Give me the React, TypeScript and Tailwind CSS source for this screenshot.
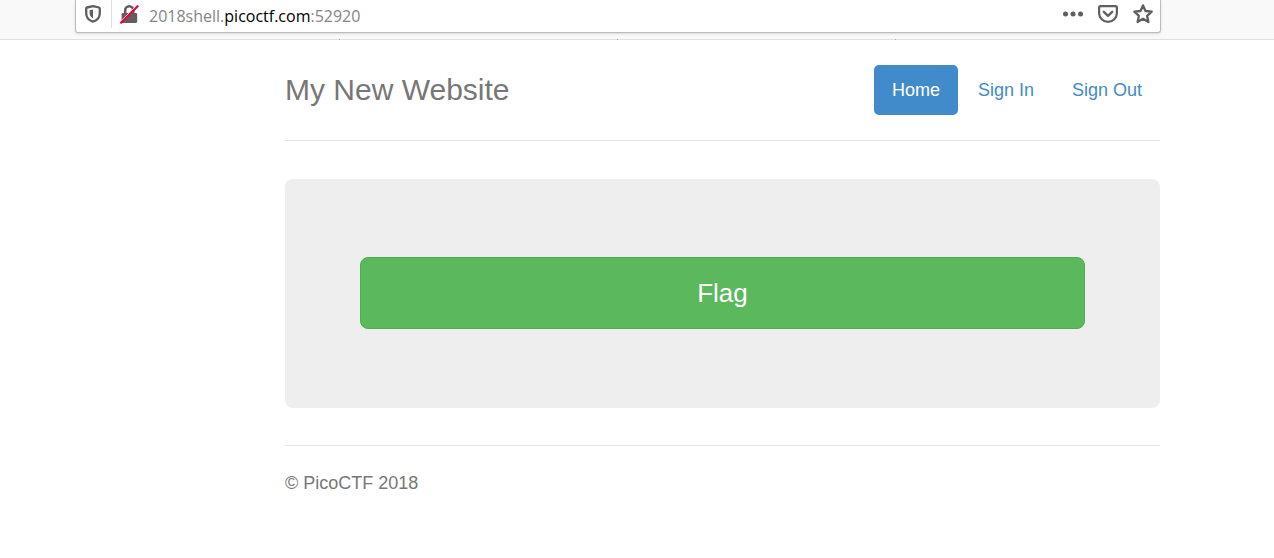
import type { ReactNode } from "react";

function ShieldIcon() {
  return (
    <svg viewBox="0 0 16 18" className="h-[18px] w-4" fill="none" aria-hidden="true">
      <path
        d="M8 1.2 14 2.5C14.5 2.6 14.8 3 14.8 3.5V8C14.8 12.2 12.2 15.4 8 16.7 3.8 15.4 1.2 12.2 1.2 8V3.5C1.2 3 1.5 2.6 2 2.5Z"
        stroke="#5f5f5f"
        strokeWidth="2.3"
        strokeLinejoin="round"
      />
      <path d="M8 4.6V13.2C5.6 12 4.6 10.2 4.6 7.8V5.2Z" fill="#5f5f5f" />
    </svg>
  );
}

function InsecureIcon() {
  return (
    <svg viewBox="0 0 19 20" className="h-5 w-[19px]" fill="none" aria-hidden="true">
      <path d="M5.2 10V6.2a4 4 0 0 1 8 0V10" stroke="#5f5f5f" strokeWidth="2.6" />
      <rect x="1.6" y="9" width="15.6" height="10" rx="1.4" fill="#5f5f5f" />
      <path d="M0.2 17.8 16.8 1.2" stroke="#fff" strokeWidth="1" />
      <path d="M1.2 18.6 17.6 2.2" stroke="#f0033f" strokeWidth="2.3" strokeLinecap="round" />
    </svg>
  );
}

function DotsIcon() {
  return (
    <svg viewBox="0 0 20 6" className="h-[6px] w-5" fill="#5f5f5f" aria-hidden="true">
      <circle cx="2.5" cy="3" r="2.5" />
      <circle cx="10" cy="3" r="2.5" />
      <circle cx="17.5" cy="3" r="2.5" />
    </svg>
  );
}

function PocketIcon() {
  return (
    <svg viewBox="0 0 20 18" className="h-[18px] w-5" fill="none" stroke="#5f5f5f" aria-hidden="true">
      <path d="M2.6 1.2h14.8c.9 0 1.5.6 1.5 1.5v5.2a8.9 8.9 0 0 1-17.8 0V2.7c0-.9.6-1.5 1.5-1.5Z" strokeWidth="2.2" />
      <path d="m5.8 6.8 4.2 4 4.2-4" strokeWidth="2.3" strokeLinecap="round" strokeLinejoin="round" />
    </svg>
  );
}

function StarIcon() {
  return (
    <svg viewBox="0 0 20 20" className="h-5 w-5" fill="none" aria-hidden="true">
      <path
        d="M10 1.4 12.5 7 18.7 7.7 14.1 11.8 15.4 18 10 14.8 4.6 18 5.9 11.8 1.3 7.7 7.5 7Z"
        stroke="#5f5f5f"
        strokeWidth="2.3"
        strokeLinejoin="round"
      />
    </svg>
  );
}

function IconButton({ label, children }: { label: string; children: ReactNode }) {
  return (
    <button type="button" aria-label={label} className="flex shrink-0 items-center justify-center">
      {children}
    </button>
  );
}

function AddressBar() {
  return (
    <header className="relative h-10 border-b border-[#e0e0e1] bg-[#f9f9fa] pr-[113px] pl-[75px]">
      <div className="flex h-[33px] items-start rounded-b-[3px] border border-t-0 border-[#bcbcbd] bg-white pr-[7px] pl-[9px] shadow-sm">
        <div className="flex h-7 items-center">
          <IconButton label="Tracking protection">
            <ShieldIcon />
          </IconButton>
          <span className="mr-2 ml-[10px] h-7 w-px bg-[#dddddd]" />
          <IconButton label="Connection is not secure">
            <InsecureIcon />
          </IconButton>
        </div>
        <p className="ml-[10px] h-8 font-['Open_Sans','Noto_Sans',sans-serif] text-[16px] leading-8 text-[#858585]">
          2018shell.<span className="text-black">picoctf.com</span>:52920
        </p>
        <div className="ml-auto flex h-7 items-center gap-[15px]">
          <IconButton label="Page actions">
            <DotsIcon />
          </IconButton>
          <IconButton label="Save to Pocket">
            <PocketIcon />
          </IconButton>
          <IconButton label="Bookmark this page">
            <StarIcon />
          </IconButton>
        </div>
      </div>
      <span className="absolute top-[39px] left-[339px] h-px w-px bg-[#a8a8a8]" />
      <span className="absolute top-[39px] left-[617px] h-px w-px bg-[#a8a8a8]" />
      <span className="absolute top-[39px] left-[895px] h-px w-px bg-[#a8a8a8]" />
    </header>
  );
}

export default function App() {
  return (
    <div className="min-h-screen bg-white font-['Liberation_Sans',Arial,sans-serif] text-[18px] leading-[26px] text-[#777777]">
      <AddressBar />
      <div className="pr-[114px] pl-[285px]">
        <div className="flex items-center justify-between border-b border-[#e5e5e5] py-[25px]">
          <h1 className="text-[30px] leading-[50px]">My New Website</h1>
          <nav aria-label="Main" className="flex gap-[2px] text-[#428bca]">
            <a href="#home" aria-current="page" className="rounded-[5px] bg-[#428bca] px-[18px] py-3 text-white">
              Home
            </a>
            <a href="#sign-in" className="px-[18px] py-3">
              Sign In
            </a>
            <a href="#sign-out" className="px-[18px] py-3">
              Sign Out
            </a>
          </nav>
        </div>
        <main className="mt-[38px] rounded-[8px] bg-[#eeeeee] px-[75px] pt-[78px] pb-[79px]">
          <button
            type="button"
            className="block h-[72px] w-full rounded-[8px] border border-[#4cae4c] bg-[#5cb85c] text-[26px] text-white"
          >
            Flag
          </button>
        </main>
        <footer className="mt-[37px] border-t border-[#e5e5e5] py-6">
          <p>© PicoCTF 2018</p>
        </footer>
      </div>
    </div>
  );
}
